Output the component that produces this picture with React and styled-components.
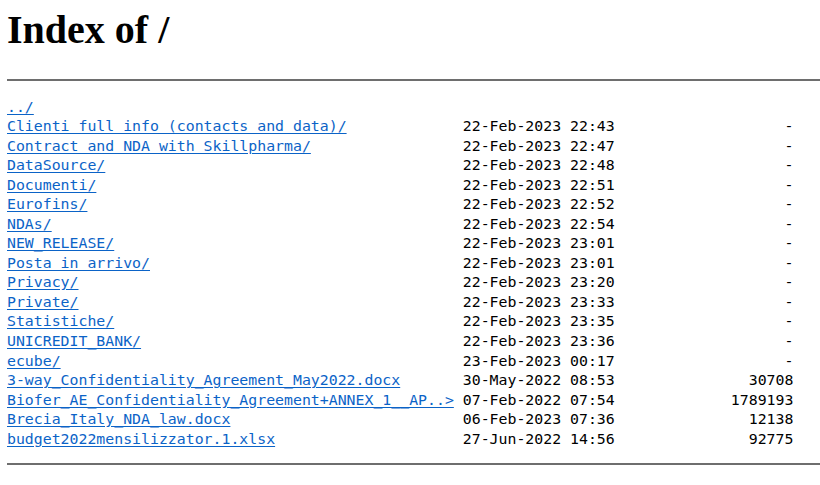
import React from "react";
import styled, { createGlobalStyle } from "styled-components";

const entries = [
  { name: "../", date: "", size: "" },
  { name: "Clienti full info (contacts and data)/", date: "22-Feb-2023 22:43", size: "-" },
  { name: "Contract and NDA with Skillpharma/", date: "22-Feb-2023 22:47", size: "-" },
  { name: "DataSource/", date: "22-Feb-2023 22:48", size: "-" },
  { name: "Documenti/", date: "22-Feb-2023 22:51", size: "-" },
  { name: "Eurofins/", date: "22-Feb-2023 22:52", size: "-" },
  { name: "NDAs/", date: "22-Feb-2023 22:54", size: "-" },
  { name: "NEW_RELEASE/", date: "22-Feb-2023 23:01", size: "-" },
  { name: "Posta in arrivo/", date: "22-Feb-2023 23:01", size: "-" },
  { name: "Privacy/", date: "22-Feb-2023 23:20", size: "-" },
  { name: "Private/", date: "22-Feb-2023 23:33", size: "-" },
  { name: "Statistiche/", date: "22-Feb-2023 23:35", size: "-" },
  { name: "UNICREDIT_BANK/", date: "22-Feb-2023 23:36", size: "-" },
  { name: "ecube/", date: "23-Feb-2023 00:17", size: "-" },
  { name: "3-way_Confidentiality_Agreement_May2022.docx", date: "30-May-2022 08:53", size: "30708" },
  { name: "Biofer_AE_Confidentiality_Agreement+ANNEX_1__AP..>", date: "07-Feb-2022 07:54", size: "1789193" },
  { name: "Brecia_Italy_NDA_law.docx", date: "06-Feb-2023 07:36", size: "12138" },
  { name: "budget2022mensilizzator.1.xlsx", date: "27-Jun-2022 14:56", size: "92775" },
];

const GlobalStyle = createGlobalStyle`
  html, body {
    margin: 0;
    background: #fff;
  }
`;

const Page = styled.div`
  padding: 7px 0 0 7px;
  width: 813px;
`;

const Title = styled.h1`
  margin: 0;
  font-family: "Liberation Serif", "Times New Roman", serif;
  font-weight: bold;
  font-size: 40px;
  line-height: 46px;
  color: #000;
`;

const Rule = styled.div`
  height: 2px;
  background: #6e6e6e;
  margin-top: ${(p) => p.$top}px;
`;

const Listing = styled.div`
  padding: 16.6px 0 14px;
  font-family: "DejaVu Sans Mono", "Liberation Mono", monospace;
  font-size: 14.85px;
  line-height: 19.53px;
  color: #000;
`;

const Row = styled.div`
  display: grid;
  grid-template-columns: 51ch 17ch 20ch;
  white-space: pre;
`;

const Name = styled.a`
  justify-self: start;
  color: #0b63c7;
  text-decoration: underline;
  text-underline-offset: 2px;
`;

const Cell = styled.span`
  text-align: ${(p) => (p.$right ? "right" : "left")};
`;

export default function App() {
  return (
    <>
      <GlobalStyle />
      <Page>
        <Title>Index of /</Title>
        <Rule $top={26} />
        <Listing>
          {entries.map((e) => (
            <Row key={e.name}>
              <Name href={e.name}>{e.name}</Name>
              <Cell>{e.date}</Cell>
              <Cell $right>{e.size}</Cell>
            </Row>
          ))}
        </Listing>
        <Rule $top={0} />
      </Page>
    </>
  );
}
